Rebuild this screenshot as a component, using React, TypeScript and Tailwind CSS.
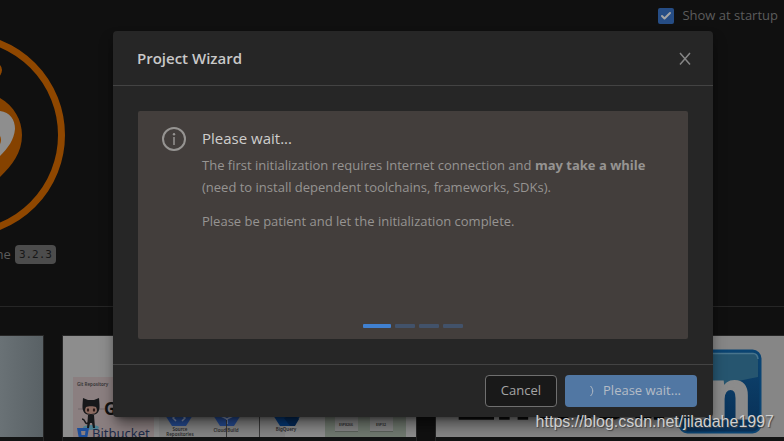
import { Check } from "lucide-react";

const slides = [0, 1, 2, 3];

function Logo() {
  return (
    <svg viewBox="0 0 204 204" className="h-[204px] w-[204px] shrink-0" aria-hidden="true">
      <circle cx="102" cy="102" r="98.5" fill="none" stroke="#8f4700" strokeWidth="7" />
      <path d="M66 40 L78 68 M138 40 L126 68" stroke="#8f4700" strokeWidth="4" />
      <circle cx="69" cy="37" r="7" fill="#8f4700" />
      <circle cx="134" cy="37" r="7" fill="#8f4700" />
      <path
        d="M102 62 C118 57 130 58 139 65 C153 73 161 87 161 102 C161 120 151 132 139 144 C127 156 114 166 102 174 C90 166 77 156 65 144 C53 132 43 120 43 102 C43 87 51 73 65 65 C74 58 86 57 102 62 Z"
        fill="#854200"
      />
      <path
        d="M102 96 C110 82 125 78 139 78 C149 79 154 87 154 96 C153 107 147 115 139 123 C128 134 115 142 102 150 C89 142 76 134 65 123 C57 115 51 107 50 96 C50 87 55 79 65 78 C79 78 94 82 102 96 Z"
        fill="#8e8e8e"
      />
      <circle cx="131" cy="107" r="9" fill="#8f4700" />
      <circle cx="73" cy="107" r="9" fill="#8f4700" />
    </svg>
  );
}

function CloudCard() {
  return (
    <svg viewBox="0 0 353 101" className="block h-[101px] w-[353px] font-['Noto_Sans',sans-serif]" role="img" aria-label="Build pipeline">
      <rect width="353" height="101" fill="#8d8d8d" />
      <rect x="10" y="41" width="81" height="60" fill="#8b7f80" />
      <text x="14" y="50" fontSize="4.5" fontWeight="600" fill="#333">Git Repository</text>
      {/* Octocat */}
      <path d="M15 73 H42" stroke="#6f6769" strokeWidth="1" />
      <ellipse cx="28" cy="91.5" rx="8" ry="2.5" fill="#4a7f91" />
      <path d="M20 62 L25 64 H31 L36 62 L36.500 69 C37 76 34 79 28 79 C22 79 19 76 19.500 69 Z" fill="#17181a" />
      <path d="M23 71 C25 70 31 70 33 71 C35 75 34 78 28 78 C22 78 21 75 23 71 Z" fill="#8a6a60" />
      <ellipse cx="25" cy="74" rx="1.2" ry="1.8" fill="#2b1a18" />
      <ellipse cx="31" cy="74" rx="1.2" ry="1.8" fill="#2b1a18" />
      <path d="M25 79 H31 L32 92 H30 L29 87 H27 L26 92 H24 Z" fill="#17181a" />
      <path d="M25 87 C21 89 23 83 19 83" fill="none" stroke="#17181a" strokeWidth="1.5" />
      <text x="41" y="79" fontSize="17" fontWeight="700" fill="#111">GitHub</text>
      {/* Bitbucket */}
      <path d="M14 92 H26 L24 103 H16 Z" fill="#1d4e9a" />
      <path d="M18 95 H22.500 L22 99 H18.500 Z" fill="#8b7f80" />
      <text x="29" y="102" fontSize="13" fill="#1c2b4a">Bitbucket</text>
      <rect x="96" y="41" width="126" height="60" fill="#858585" />
      {/* Service hexagons */}
      <path d="M109 67 L123 67 L130 79 L123 90 H109 L102 79 Z" fill="#264c94" />
      <path d="M113 79 L110 82 L113 85 M119 79 L122 82 L119 85" fill="none" stroke="#8d9dbd" strokeWidth="1.5" />
      <path d="M157 67 L171 67 L178 79 L171 90 H157 L150 79 Z" fill="#264c94" />
      <path d="M158 80 L164 83 L170 80 M164 83 V88" fill="none" stroke="#8d9dbd" strokeWidth="1.5" />
      <path d="M216 67 L231 67 L238 79 L231 90 H217 L210 79 Z" fill="#063a78" />
      <path d="M221 82 L227 90 H232 L236 83 L230 78 Z" fill="#042b5c" />
      <path d="M163.500 84 V101 M196.500 78 V101" stroke="#3a3a3a" strokeWidth="1" />
      <g fontSize="4.500" fontWeight="600" fill="#2b2b2b" textAnchor="middle">
        <text x="117" y="95">Source</text>
        <text x="117" y="100">Repositories</text>
        <text x="163" y="96">Cloud Build</text>
        <text x="223" y="95">BigQuery</text>
      </g>
      <rect x="262" y="62" width="81" height="39" fill="#717a70" />
      <rect x="272" y="70" width="23" height="25" fill="#858585" />
      <rect x="307" y="70" width="23" height="25" fill="#858585" />
      <path d="M272 95.500 H295 M307 95.500 H330" stroke="#5c625b" />
      <g fontSize="3.500" fontWeight="600" fill="#2b2b2b" textAnchor="middle">
        <text x="283" y="90">ESP8266</text>
        <text x="318" y="90">ESP32</text>
      </g>
    </svg>
  );
}

function LinkedInCard() {
  return (
    <svg viewBox="0 0 350 101" className="block h-[101px] w-[350px] font-['Liberation_Sans',Arial,sans-serif] font-bold" role="img" aria-label="LinkedIn">
      <defs>
        <linearGradient id="badge" x1="0" y1="0" x2="0" y2="1">
          <stop offset="0" stopColor="#0d4470" />
          <stop offset="1" stopColor="#082f55" />
        </linearGradient>
      </defs>
      <rect width="350" height="101" fill="#868686" />
      <text x="19" y="83" fontSize="66" fill="#0d0d0d" stroke="#0d0d0d" strokeWidth="1.5">Linked</text>
      <rect x="243.5" y="14.500" width="81" height="82" rx="8" fill="url(#badge)" stroke="#0a4473" strokeWidth="2" />
      <path d="M246 24 Q246 18 252 18 H317 Q322 18 322 24 V41 C299 45 269 52 246 66 Z" fill="#26556f" />
      <path d="M251 17.500 H317 Q321.500 17.500 322 23" fill="none" stroke="#48748c" strokeWidth="1.5" />
      <text x="254" y="82" fontSize="68" fill="#8b8b8b" stroke="#8b8b8b" strokeWidth="3">in</text>
    </svg>
  );
}

function HomePage() {
  return (
    <main className="h-full">
      <div className="flex h-[33px] items-center justify-end px-1.5 pb-0.5">
        <label className="flex items-center gap-2 text-[13px] text-[#5c5c5c]">
          <span className="relative block h-4 w-4">
            <input type="checkbox" defaultChecked className="block h-4 w-4 appearance-none rounded-xs bg-[#264d85]" />
            <Check className="pointer-events-none absolute top-0.5 left-0.5 h-3 w-3 text-[#a5a5a5]" strokeWidth={4} />
          </span>
          Show at startup
        </label>
      </div>
      <div className="flex w-[65px] justify-end">
        <Logo />
      </div>
      <p className="flex h-[35px] w-14 items-center justify-end gap-1 text-[13px] text-[#5c5c5c]">
        Home
        <code className="rounded-sm bg-[#4c4c4c] px-1 font-['DejaVu_Sans_Mono',monospace] text-[11px] leading-[19px] text-[#171717]">3.2.3</code>
      </p>
      <hr className="mt-[34px] border-[#262626]" />
      <div className="mt-7 flex gap-[18px]">
        <div className="h-[110px] w-11 shrink-0 border border-l-0 border-[#262626] bg-[#131414]">
          <div className="h-[101px] bg-linear-to-r from-[#6a7276] to-[#596165]" />
        </div>
        <div className="h-[110px] shrink-0 border border-[#262626] bg-[#131414]">
          <CloudCard />
        </div>
        <div className="h-[110px] shrink-0 border border-[#262626] bg-[#131414]">
          <LinkedInCard />
        </div>
      </div>
    </main>
  );
}

function WizardDialog() {
  return (
    <section role="dialog" aria-labelledby="wizard-title" className="w-full max-w-[600px] rounded bg-[#262626] shadow-lg shadow-black/50">
      <header className="flex items-center justify-between border-b border-[#434343] py-4 pr-5 pl-6">
        <h1 id="wizard-title" className="text-[15px] leading-[22px] font-semibold text-[#c9c9c9]">Project Wizard</h1>
        <button type="button" aria-label="Close" className="text-[#868686]">
          <svg viewBox="0 0 16 16" className="h-4 w-4" fill="none" stroke="currentColor" strokeWidth="1.5">
            <path d="M3 3 L13 14.500 M13 3 L3 14.500" />
          </svg>
        </button>
      </header>

      <div className="p-[25px]">
        <div className="flex h-[228px] flex-col justify-between rounded-xs bg-[#433e3c] px-6 pt-4 pb-[11px]">
          <div className="flex gap-4">
            <svg viewBox="0 0 24 24" className="h-6 w-6 shrink-0" fill="none" stroke="#969492" strokeWidth="2" aria-hidden="true">
              <circle cx="12" cy="12" r="11" />
              <path d="M12 10 V18" strokeWidth="1.5" />
              <circle cx="12" cy="7.2" r="1.2" fill="#969492" stroke="none" />
            </svg>
            <div className="text-[13px] leading-[22px] text-[#969492]">
              <h2 className="mb-[5px] text-[15px] text-[#cfcecd]">Please wait...</h2>
              <p className="mb-3">
                The first initialization requires Internet connection and <strong>may take a while</strong>
                <br />
                (need to install dependent toolchains, frameworks, SDKs).
              </p>
              <p>Please be patient and let the initialization complete.</p>
            </div>
          </div>
          <div className="flex justify-center gap-1">
            {slides.map((i) => (
              <button
                key={i}
                type="button"
                aria-label={`Slide ${i + 1}`}
                className={i === 0 ? "h-1 w-7 rounded-[1px] bg-[#4080d0]" : "h-1 w-5 rounded-[1px] bg-[#42526a]"}
              />
            ))}
          </div>
        </div>
      </div>

      <footer className="flex justify-end gap-2 border-t border-[#434343] px-4 py-2.5 text-[13px]">
        <button type="button" className="h-8 rounded border border-[#6f6f6f] bg-[#191919] px-[15px] text-[#a5a5a5]">
          Cancel
        </button>
        <button type="button" className="flex h-8 w-[132px] items-center justify-end gap-2 rounded bg-[#5177a3] px-4 font-medium text-[#b4bcc6]">
          <svg viewBox="0 0 6 12" className="h-3 w-1.5" fill="none" stroke="currentColor" aria-hidden="true">
            <path d="M1.500 1 C4.500 4 4.500 8 1.500 11" />
          </svg>
          Please wait...
        </button>
      </footer>
    </section>
  );
}

export default function App() {
  return (
    <div className="relative h-screen overflow-hidden bg-[#101010] font-['Open_Sans','Noto_Sans',sans-serif]">
      <HomePage />
      <div className="absolute inset-0 flex items-start justify-center pt-[31px] pl-[42px]">
        <WizardDialog />
      </div>
      <p className="absolute right-2.5 bottom-[7px] font-['Liberation_Sans',Arial,sans-serif] text-base leading-6 text-[#cfcfcf] [text-shadow:1px_1px_1px_#444]">
        https://blog.csdn.net/jiladahe1997
      </p>
    </div>
  );
}
